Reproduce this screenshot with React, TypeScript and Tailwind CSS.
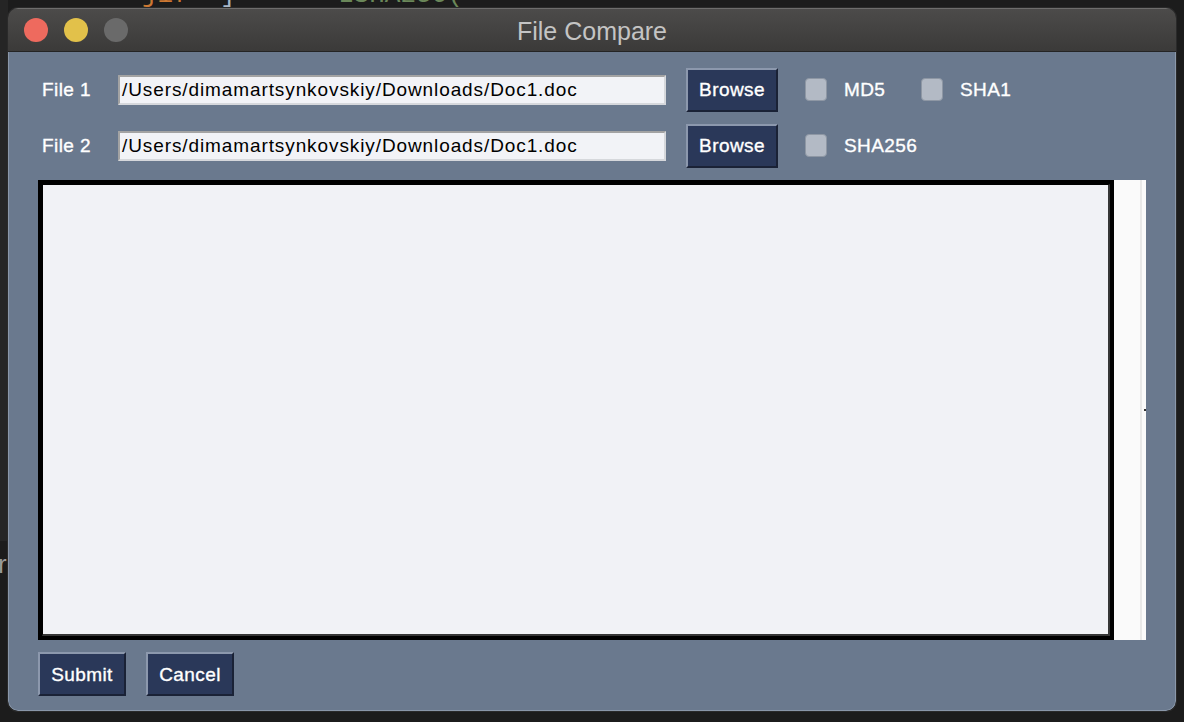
import React from 'react';

const PATH = '/Users/dimamartsynkovskiy/Downloads/Doc1.doc';

// white label text: regular weight with a hair of stroke to mimic mac rendering
const whiteText = 'text-white text-[19px] tracking-[0.4px] [-webkit-text-stroke:0.35px_white]';

function NavyButton({ label, width }: { label: string; width: string }) {
  return (
    <button
      className={`${width} h-[44px] shrink-0 bg-[#2a3859] border-2 border-t-[#8c98ad] border-l-[#8c98ad] border-r-[#1a2236] border-b-[#1a2236] pt-[2px] flex items-center justify-center ${whiteText}`}
    >
      {label}
    </button>
  );
}

function Check({ label, width }: { label: string; width: string }) {
  return (
    <div className={`${width} flex items-center gap-[17px] shrink-0`}>
      <div className="w-[22px] h-[23px] rounded-[4px] bg-[#b3bac5] border border-[#8e97a4]" />
      <span className={`pt-[2px] ${whiteText}`}>{label}</span>
    </div>
  );
}

function FileRow({ name, checks }: { name: string; checks: React.ReactNode }) {
  return (
    <div className="flex items-center h-[45px] pl-[4px]">
      <span className={`w-[76px] shrink-0 pt-[2px] ${whiteText}`}>{name}</span>
      <div className="w-[548px] h-[30px] shrink-0 bg-[#f2f3f7] border-2 border-t-[#a3a3a3] border-l-[#a3a3a3] border-r-[#d6d8dc] border-b-[#d6d8dc] pl-[2px] pt-[2px] flex items-center text-black text-[19px] tracking-[0.9px] whitespace-nowrap overflow-hidden">
        {PATH}
      </div>
      <div className="ml-[20px]">
        <NavyButton label="Browse" width="w-[92px]" />
      </div>
      <div className="ml-[27px] flex items-center">{checks}</div>
    </div>
  );
}

export default function App() {
  return (
    <div className="relative w-[1184px] h-[722px] bg-[#1c1c1c] overflow-hidden pt-[8px] pl-[8px] font-['Liberation_Sans',Arial,sans-serif]">
      {/* editor behind the window */}
      <div className="absolute left-0 top-0 w-[8px] h-[541px] bg-[#252525]" />
      <div className="absolute top-[-18px] left-0 w-full h-[26px] font-['Liberation_Mono',monospace] text-[26px] leading-[26px] whitespace-nowrap">
        <span className="absolute left-[142px] text-[#cc7832]">jif</span>
        <span className="absolute left-[220px] text-[#a9b7c6]">]</span>
        <span className="absolute left-[338px] text-[#6a8759]">LSHA256(</span>
      </div>
      <span className="absolute left-[-2px] top-[545px] text-[26px] text-[#9a9a9a]">r</span>

      <div className="relative w-[1168px] h-[703px] rounded-[10px] overflow-hidden flex flex-col shadow-[0_0_0_1px_#2a2a2a]">
        <div className="relative h-[44px] shrink-0 bg-gradient-to-b from-[#4c4b4a] to-[#3b3a39] border-t border-[#6e6d6c] border-b border-b-[#242424] flex items-center pl-[16px] gap-[16px]">
          <div className="w-[24px] h-[24px] rounded-full bg-[#ee6a5e]" />
          <div className="w-[24px] h-[24px] rounded-full bg-[#e2c14a]" />
          <div className="w-[24px] h-[24px] rounded-full bg-[#6a6a6a]" />
          <div className="absolute inset-0 pt-[3px] flex items-center justify-center text-[25px] text-[#c4c4c4]">
            File Compare
          </div>
        </div>

        <div className="flex-1 bg-[#6a798e] border-x border-b border-[#8a97a9] rounded-b-[10px] px-[29px] pt-[15px] flex flex-col">
          <FileRow
            name="File 1"
            checks={
              <>
                <Check label="MD5" width="w-[116px]" />
                <Check label="SHA1" width="w-[100px]" />
              </>
            }
          />
          <div className="mt-[11px]">
            <FileRow name="File 2" checks={<Check label="SHA256" width="w-[130px]" />} />
          </div>

          <div className="mt-[12px] flex h-[460px]">
            <div className="w-[1076px] h-full border-4 border-black">
              <div className="w-full h-full bg-[#f1f2f6] border-t border-l border-black border-r-2 border-b-2 border-r-[#363636] border-b-[#363636]" />
            </div>
            <div className="w-[32px] h-full bg-[#fafafa] flex">
              <div className="w-[26px]" />
              <div className="w-[2px] bg-[#e8e8e8]" />
              <div className="w-[4px] flex items-center pl-[2px]">
                <div className="w-[2px] h-[2px] bg-[#333]" />
              </div>
            </div>
          </div>

          <div className="mt-[12px] flex gap-[20px]">
            <NavyButton label="Submit" width="w-[88px]" />
            <NavyButton label="Cancel" width="w-[88px]" />
          </div>
        </div>
      </div>
    </div>
  );
}
